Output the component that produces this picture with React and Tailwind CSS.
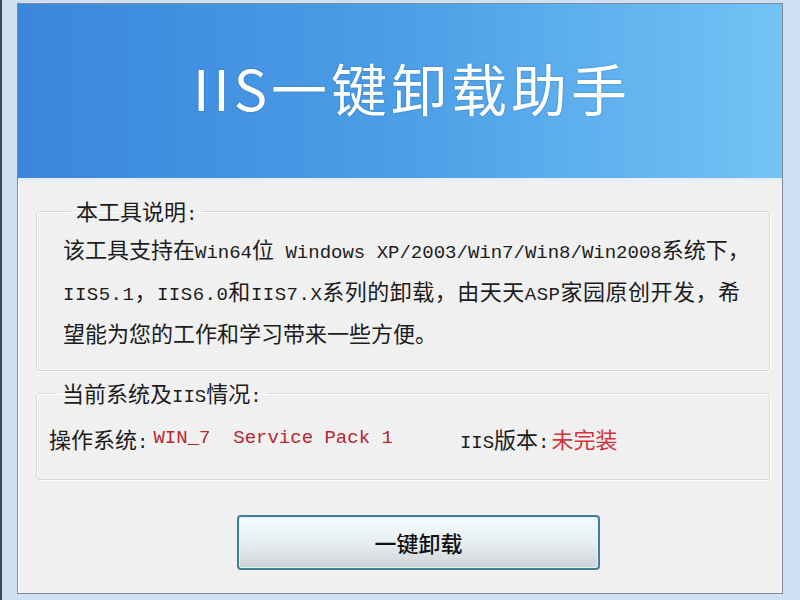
import React from "react";

const M = ({ children, className = "" }) => (
  <span className={`font-['Liberation_Mono',monospace] text-[19px] leading-none ${className}`}>{children}</span>
);

export default function App() {
  return (
    <div className="w-[800px] h-[600px] overflow-hidden bg-[#cfe0f3] border-l-[2px] border-[#3f4650] pl-[15px] pr-[17px] pt-[3px] pb-[6px] font-['Noto_Sans_CJK_SC',sans-serif] text-[#1c1c1c]">
      <div className="h-full flex flex-col border border-[#7f8b98] bg-[#f0f0f0] shadow-[inset_1px_0_0_#ffffff]">
        <div className="h-[177px] shrink-0 flex items-center justify-center pl-[24px] pb-[8px] bg-gradient-to-r from-[#3a86dc] via-[#4c9ee6] to-[#72c3f5] border-b-[3px] border-[#e4eef6]">
          <span className="text-white text-[56px] leading-none tracking-[4px] [text-shadow:0_0_2px_rgba(40,90,160,0.6)]">
            IIS一键卸载助手
          </span>
        </div>

        <div className="flex flex-col pl-[18px] pr-[12px]">
          <fieldset className="mt-[17px] border border-[#d6d9dc] rounded-[3px] shadow-[inset_1px_1px_0_#ffffff,1px_1px_0_#ffffff] pl-[26px] pr-[10px] pt-[2px] pb-[17px]">
            <legend className="ml-[8px] px-[5px] text-[22px] leading-[24px]">
              本工具说明<M>:</M>
            </legend>
            <div className="text-[22px] leading-[42px] whitespace-nowrap">
              <div>
                该工具支持在<M>Win64</M>位<M> Windows XP/2003/Win7/Win8/Win2008</M>系统下，
              </div>
              <div className="tracking-[0.5px]">
                <M>IIS5.1</M>，<M>IIS6.0</M>和<M>IIS7.X</M>系列的卸载，由天天<M>ASP</M>家园原创开发，希
              </div>
              <div>望能为您的工作和学习带来一些方便。</div>
            </div>
          </fieldset>

          <fieldset className="mt-[9px] border border-[#d6d9dc] rounded-[3px] shadow-[inset_1px_1px_0_#ffffff,1px_1px_0_#ffffff] pl-[12px] pr-[10px] pt-[10px] pb-[20px]">
            <legend className="ml-[8px] px-[5px] text-[22px] leading-[24px]">
              当前系统及<M>IIS</M>情况<M>:</M>
            </legend>
            <div className="flex items-center text-[22px] leading-[42px] whitespace-nowrap">
              <span>
                操作系统<M>:</M>
              </span>
              <M className="ml-[5px] text-[#b8272f] whitespace-pre">WIN_7  Service Pack 1</M>
              <span className="ml-[67px]">
                <M>IIS</M>版本<M>:</M>
              </span>
              <span className="ml-[2px] text-[#d0333a]">未完装</span>
            </div>
          </fieldset>

          <button className="mt-[35px] ml-[201px] w-[363px] h-[55px] rounded-[4px] border-[2px] border-[#3f8098] bg-gradient-to-b from-[#f3fbfe] via-[#e8eff3] to-[#cdd2d6] shadow-[inset_0_0_0_1px_#d8f3fc] flex items-center justify-center text-[22px] text-[#111] font-medium">
            一键卸载
          </button>
        </div>
      </div>
    </div>
  );
}
